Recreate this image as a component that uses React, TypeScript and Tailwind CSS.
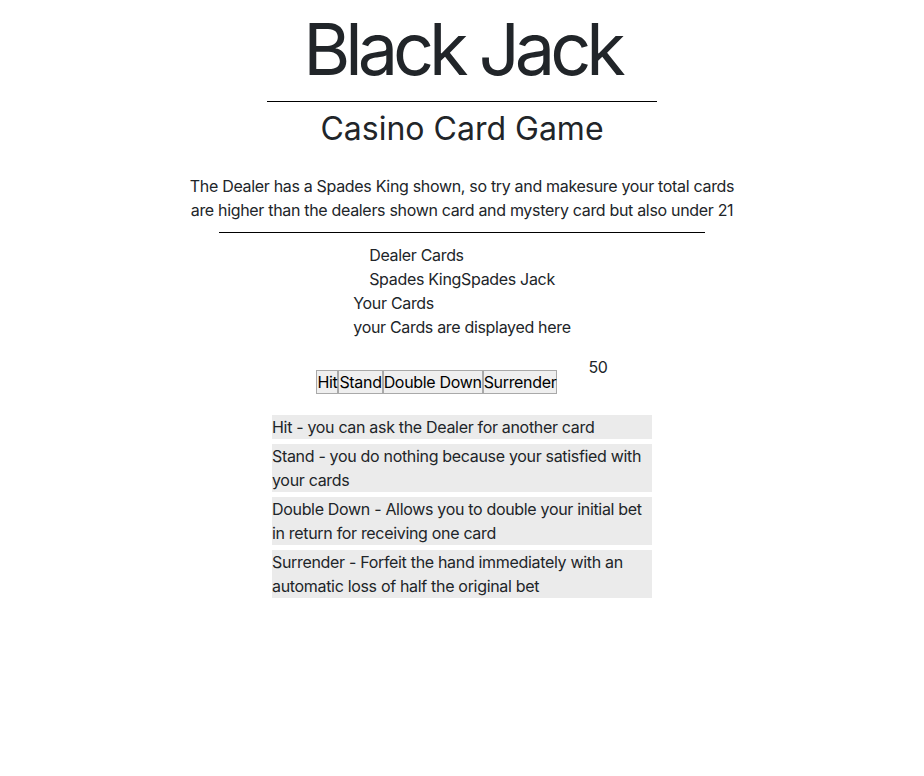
const moves = [
  "Hit - you can ask the Dealer for another card",
  "Stand - you do nothing because your satisfied with your cards",
  "Double Down - Allows you to double your initial bet in return for receiving one card",
  "Surrender - Forfeit the hand immediately with an automatic loss of half the original bet",
];

const App = () => {
  return (
    <div className="min-h-[776px] bg-white text-[#212529] text-center text-base leading-6 tracking-[-0.02em] font-['Inter','Liberation_Sans',sans-serif]">
      {/* Header */}
      <h1 className="mt-[6px] text-[72px] leading-[86px] font-normal tracking-[-0.07em]">Black Jack</h1>
      <hr className="w-[390px] mx-auto mt-[9px] border-0 border-t border-black" />
      <h2 className="text-[32px] leading-[38px] mt-[8px] tracking-normal">Casino Card Game</h2>

      <p className="w-[560px] mx-auto mt-[26px]">
        The Dealer has a Spades King shown, so try and makesure your total cards are higher than the dealers shown card and mystery card but also under 21
      </p>
      <hr className="w-[486px] mx-auto mt-[10px] border-0 border-t border-black" />

      {/* Cards */}
      <div className="w-fit mx-auto mt-[10px] text-left">
        <div>Dealer Cards</div>
        <div>Spades KingSpades Jack</div>
      </div>
      <div className="w-fit mx-auto text-left">
        <div>Your Cards</div>
        <div>your Cards are displayed here</div>
      </div>

      {/* Actions */}
      <div className="flex justify-center items-start gap-[31px] mt-[16px]">
        <div className="flex mt-[15px]">
          {["Hit", "Stand", "Double Down", "Surrender"].map((b) => (
            <button key={b} className="h-6 px-0 bg-[#efefef] border border-[#a9a9a9] text-black leading-[22px]">
              {b}
            </button>
          ))}
        </div>
        <span>50</span>
      </div>

      {/* Rules */}
      <div className="w-[380px] mx-auto mt-[21px] flex flex-col gap-[5px] text-left">
        {moves.map((m) => (
          <div key={m} className="bg-[#ebebeb]">{m}</div>
        ))}
      </div>
    </div>
  );
};

export default App;
